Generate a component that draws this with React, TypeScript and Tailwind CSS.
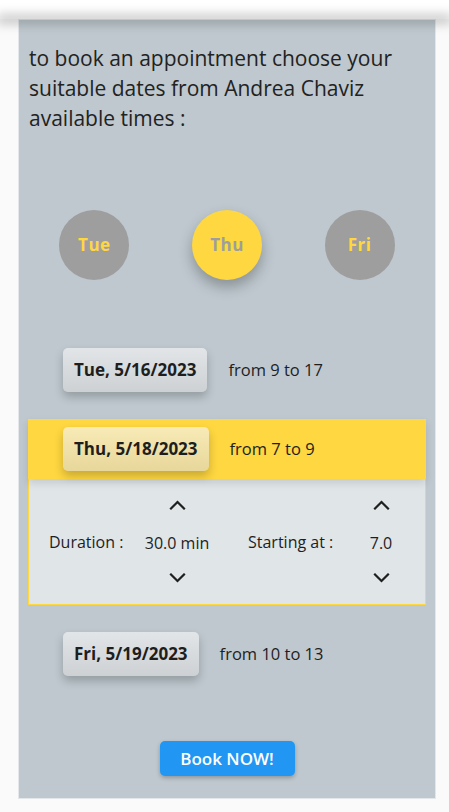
import { useState } from 'react'

const days = [
  { short: 'Tue', date: 'Tue, 5/16/2023', range: 'from 9 to 17' },
  { short: 'Thu', date: 'Thu, 5/18/2023', range: 'from 7 to 9' },
  { short: 'Fri', date: 'Fri, 5/19/2023', range: 'from 10 to 13' },
]

function Chevron({ up }: { up?: boolean }) {
  return (
    <svg width="17" height="10" viewBox="0 0 17 10" fill="none">
      <polyline
        points={up ? '2,8.5 8.5,2 15,8.5' : '2,1.5 8.5,8 15,1.5'}
        stroke="#1f1f1f"
        strokeWidth="2.2"
        strokeLinecap="square"
      />
    </svg>
  )
}

function Picker({ value }: { value: string }) {
  return (
    <div className="flex w-[66px] flex-col items-center">
      <button className="flex h-6 items-center justify-center">
        <Chevron up />
      </button>
      <div className="mt-[14px] flex h-6 items-center whitespace-nowrap">{value}</div>
      <button className="mt-[11px] flex h-6 items-center justify-center">
        <Chevron />
      </button>
    </div>
  )
}

export default function App() {
  const [selected, setSelected] = useState(1)

  return (
    <div
      className="min-h-screen bg-[#fafafa] text-[#1e1e1e]"
      style={{ fontFamily: '"Segoe UI", "Open Sans", sans-serif' }}
    >
      <div className="relative z-10 h-0 shadow-[0_0_12px_3px_rgba(0,0,0,0.35)]" />
      <div className="ml-[18px] mt-[19px] w-[418px] border border-[#e3e7e9] bg-[#bec8ce] px-[9px] pb-[22px]">
        <p className="px-px pt-[23px] text-[21px] leading-[30px] text-[#222]">
          to book an appointment choose your suitable dates from Andrea Chaviz available times :
        </p>

        <div className="mt-[77px] flex justify-around">
          {days.map((d, i) => (
            <button
              key={d.short}
              onClick={() => setSelected(i)}
              className={
                i === selected
                  ? 'flex h-[70px] w-[70px] items-center justify-center rounded-full bg-[#ffd740] text-[17px] font-bold tracking-[0.5px] text-[#9e9e9e] shadow-[0_7px_14px_rgba(0,0,0,0.28)]'
                  : 'flex h-[70px] w-[70px] items-center justify-center rounded-full bg-[#9e9e9e] text-[17px] font-bold tracking-[0.5px] text-[#ffd740]'
              }
            >
              {d.short}
            </button>
          ))}
        </div>

        <div className="mt-[60px] flex flex-col gap-[19px]">
          {days.map((d, i) => (
            <div key={d.date}>
              <div
                className={
                  i === selected
                    ? 'relative z-10 flex h-[60px] items-center bg-[#ffd740] pl-[35px] shadow-[0_4px_8px_rgba(0,0,0,0.12)]'
                    : 'flex h-[60px] items-center pl-[35px]'
                }
              >
                <div className="flex h-[44px] items-center rounded-[5px] bg-gradient-to-b from-[rgba(245,245,245,0.65)] to-[rgba(215,215,215,0.6)] px-[11px] text-[17px] font-bold shadow-[0_5px_10px_rgba(0,0,0,0.22)]">
                  {d.date}
                </div>
                <span className="ml-[21px] text-[16.5px]">{d.range}</span>
              </div>
              {i === selected && (
                <div className="flex border border-t-0 border-[#ffd740] bg-[#e0e5e8] pb-[14px] pl-[20px] pt-[14px] text-[16px]">
                  <div className="flex w-[95px] items-center">Duration :</div>
                  <Picker value="30.0 min" />
                  <div className="ml-[38px] flex w-[100px] items-center">Starting at :</div>
                  <Picker value="7.0" />
                </div>
              )}
            </div>
          ))}
        </div>

        <div className="mt-[57px] flex justify-center">
          <button className="h-[35px] w-[135px] rounded-[5px] bg-[#2196f3] text-[17px] font-semibold text-white shadow-[0_2px_4px_rgba(0,0,0,0.25)]">
            Book NOW!
          </button>
        </div>
      </div>
    </div>
  )
}
